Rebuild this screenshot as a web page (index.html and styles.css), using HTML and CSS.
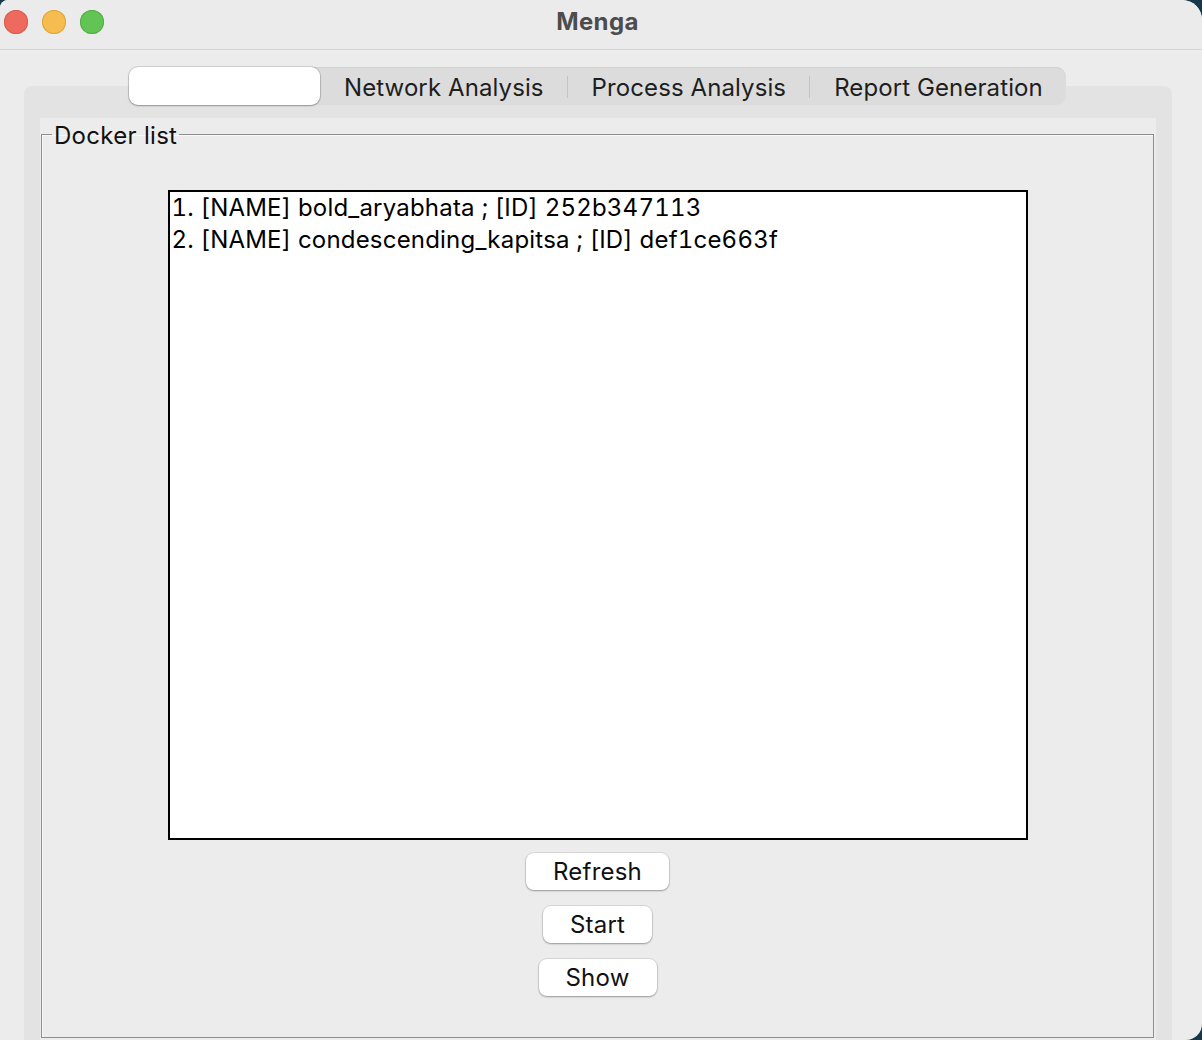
FILE: index.html
```html
<!DOCTYPE html>
<html lang="en">
<head>
<meta charset="utf-8">
<title>Menga</title>
<link rel="stylesheet" href="styles.css">
</head>
<body>
<div class="window">
  <header class="titlebar">
    <div class="lights">
      <span class="light red"></span>
      <span class="light yellow"></span>
      <span class="light green"></span>
    </div>
    <div class="title">Menga</div>
    <div class="spacer"></div>
  </header>
  <main class="main">
    <nav class="tabbar">
      <div class="tab selected"></div>
      <div class="tab">Network Analysis</div>
      <span class="sep"></span>
      <div class="tab">Process Analysis</div>
      <span class="sep"></span>
      <div class="tab">Report Generation</div>
    </nav>
    <section class="pane">
      <div class="inner">
        <fieldset class="group">
          <legend class="legend">Docker list</legend>
          <div class="group-body">
            <div class="listbox">
              <div class="item">1. [NAME] bold_aryabhata ; [ID] 252b347113</div>
              <div class="item">2. [NAME] condescending_kapitsa ; [ID] def1ce663f</div>
            </div>
            <button class="btn">Refresh</button>
            <button class="btn">Start</button>
            <button class="btn">Show</button>
          </div>
        </fieldset>
      </div>
    </section>
  </main>
</div>
</body>
</html>
```
FILE: styles.css
```css
* { box-sizing: border-box; }
html, body { margin: 0; padding: 0; }
body {
  background: #16384a;
  font-family: Inter, "Liberation Sans", sans-serif;
  width: 1202px;
  height: 1040px;
  overflow: hidden;
}
.window {
  width: 1202px;
  height: 1040px;
  background: #ececec;
  border-radius: 8px 20px 16px 0;
  overflow: hidden;
  display: flex;
  flex-direction: column;
}
.titlebar {
  height: 50px;
  flex: none;
  border-bottom: 1px solid #d4d4d4;
  display: grid;
  grid-template-columns: 1fr auto 1fr;
  align-items: center;
  background: #ebebeb;
}
.lights {
  display: flex;
  gap: 14px;
  padding-left: 4px;
  margin-top: -6px;
}
.light {
  width: 24px;
  height: 24px;
  border-radius: 50%;
  display: block;
}
.red { background: #ee6a5e; box-shadow: inset 0 0 0 1px #d95a50; }
.yellow { background: #f5bd4f; box-shadow: inset 0 0 0 1px #dea53c; }
.green { background: #61c454; box-shadow: inset 0 0 0 1px #52ad45; }
.title {
  font-size: 24px;
  font-weight: 700;
  letter-spacing: 0.4px;
  color: #4c4c4c;
  margin-top: -6px;
  margin-right: 7px;
}
.main {
  flex: 1;
  display: flex;
  flex-direction: column;
  padding: 17px 30px 0 24px;
  min-height: 0;
}
.tabbar {
  position: relative;
  z-index: 1;
  align-self: flex-start;
  margin-left: 105px;
  height: 39px;
  margin-bottom: -20px;
  background: #dcdcdc;
  border-radius: 10px;
  box-shadow: inset 0 1px 0 #d2d2d2, inset 0 -1px 0 #e2e2e2;
  display: flex;
  align-items: center;
}
.tab {
  height: 39px;
  display: flex;
  align-items: center;
  padding: 1px 23px 0 24px;
  font-size: 24px;
  letter-spacing: 0.1px;
  color: #1e1e1e;
  white-space: nowrap;
}
.tab.selected {
  width: 191px;
  height: 38px;
  padding: 0;
  align-self: flex-start;
  background: #ffffff;
  border-radius: 9px;
  box-shadow: 0 0 0 1px rgba(0,0,0,0.12), 0 1px 2px rgba(0,0,0,0.25);
}
.sep {
  width: 1px;
  height: 22px;
  background: #c4c4c4;
}
.pane {
  flex: 1;
  background: #e3e3e3;
  border-radius: 8px 8px 0 0;
  padding: 32px 16px 0 16px;
  display: flex;
  flex-direction: column;
  min-height: 0;
}
.inner {
  flex: 1;
  background: #ececec;
  display: flex;
  flex-direction: column;
  padding: 0 2px 2px 1px;
  min-height: 0;
}
.group {
  flex: 1;
  margin: 0;
  padding: 0;
  border: 1px solid #8e8e8e;
  box-shadow: inset 1px 1px 0 #f8f8f8;
  min-width: 0;
  min-height: 0;
}
.legend {
  margin-left: 10px;
  padding: 4px 2px 0;
  font-size: 24px;
  letter-spacing: 0.3px;
  line-height: 28px;
  color: #111;
}
.group-body {
  display: flex;
  flex-direction: column;
  align-items: center;
  padding-top: 40px;
}
.listbox {
  width: 860px;
  height: 650px;
  background: #ffffff;
  border: 2px solid #000;
  padding: 0 2px;
  margin-bottom: 13px;
}
.item {
  font-size: 24px;
  line-height: 32px;
  letter-spacing: 0.2px;
  font-variant-numeric: tabular-nums;
  color: #000;
  white-space: nowrap;
}
.btn {
  font-family: inherit;
  font-size: 24px;
  letter-spacing: 0.2px;
  color: #111;
  height: 37px;
  padding: 0 27px;
  border: none;
  background: #ffffff;
  border-radius: 8px;
  box-shadow: 0 0 0 1px rgba(0,0,0,0.08), 0 1px 2px rgba(0,0,0,0.3);
  margin-bottom: 16px;
}
```
